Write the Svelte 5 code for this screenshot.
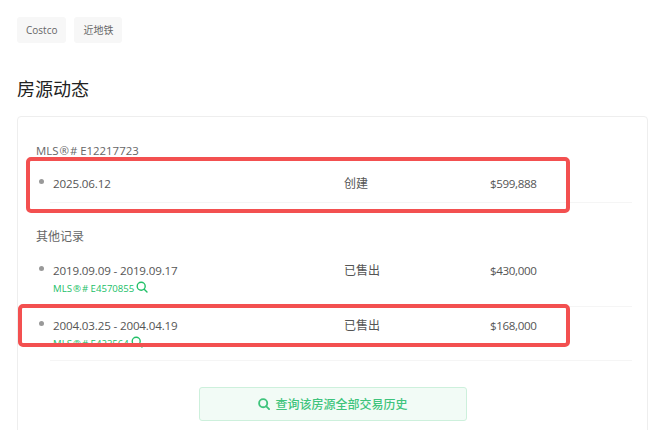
<script>
  const otherRecords = [
    { date: "2019.09.09 - 2019.09.17", status: "已售出", price: "$430,000", mls: "MLS", id: "# E4570855" },
    { date: "2004.03.25 - 2004.04.19", status: "已售出", price: "$168,000", mls: "MLS", id: "# E423564" },
  ];
</script>

<div class="page">
  <div class="tags">
    <span class="tag">Costco</span>
    <span class="tag">近地铁</span>
  </div>

  <h2>房源动态</h2>

  <section class="card">
    <div class="label first">MLS<span class="reg">®</span># E12217723</div>
    <div class="row">
      <i class="dot"></i>
      <div class="body">
        <div class="date">2025.06.12</div>
        <div>创建</div>
        <div class="price">$599,888</div>
      </div>
    </div>

    <div class="label other">其他记录</div>
    {#each otherRecords as rec}
      <div class="row">
        <i class="dot"></i>
        <div class="body">
          <div>
            <div class="date">{rec.date}</div>
            <a class="mls" href="#top">
              <span>{rec.mls}<span class="reg">®</span>{rec.id}</span>
              <svg width="12" height="12" viewBox="0 0 12 12" fill="none" stroke="#22c068" stroke-width="1.4">
                <circle cx="5.2" cy="5.2" r="4" />
                <path d="M8.2 8.2 11 11" stroke-linecap="round" />
              </svg>
            </a>
          </div>
          <div>{rec.status}</div>
          <div class="price">{rec.price}</div>
        </div>
      </div>
    {/each}

    <button class="history">
      <svg width="12" height="12" viewBox="0 0 13 13" fill="none" stroke="#3ec47c" stroke-width="2">
        <circle cx="5.6" cy="5.6" r="4.4" />
        <path d="M9 9l3 3" stroke-linecap="round" />
      </svg>
      查询该房源全部交易历史
    </button>
  </section>

  <div class="mark mark-a"></div>
  <div class="mark mark-b"></div>
</div>

<style>
  :global(body) {
    margin: 0;
    background: #fff;
    overflow: hidden;
  }

  .page {
    position: relative;
    height: 430px;
    overflow: hidden;
    padding: 17px 12px 0 17px;
    box-sizing: border-box;
    font-family: "Open Sans", "Noto Sans CJK SC", sans-serif;
    font-size: 12px;
    color: #555;
  }

  .tags {
    display: flex;
    gap: 8px;
  }

  .tag {
    background: #f7f7f7;
    border-radius: 3px;
    color: #666;
    font-size: 10px;
    height: 26px;
    line-height: 26px;
    padding: 0 9px;
  }

  h2 {
    margin: 33px 0 14px;
    font-size: 18px;
    font-weight: 400;
    line-height: 26px;
    color: #222;
  }

  .card {
    border: 1px solid #eee;
    border-radius: 4px;
    padding: 25px 15px 0 18px;
    height: 340px;
    box-sizing: border-box;
  }

  .label {
    line-height: 18px;
    color: #666;
  }

  .first {
    font-size: 11.4px;
  }

  .reg {
    margin: 0 1px;
  }

  .other {
    margin: 25px 0 6px;
  }

  .row {
    display: flex;
  }

  .dot {
    width: 5px;
    height: 5px;
    margin: 14px 6px 0 3px;
    flex: none;
    border-radius: 50%;
    background: #999;
  }

  .first + .row .dot {
    margin-top: 19px;
  }

  .body {
    flex: 1;
    display: grid;
    grid-template-columns: 291px 146px 1fr;
    padding: 10px 0 0 3px;
    border-bottom: 1px solid #f5f5f5;
    line-height: 18px;
    height: 54px;
    box-sizing: border-box;
  }

  .first + .row .body {
    height: 43px;
    padding-top: 15px;
  }

  .other + .row .body {
    height: 55px;
  }

  .date {
    font-size: 11.6px;
    letter-spacing: -0.15px;
  }

  .price {
    font-size: 11.6px;
    letter-spacing: -0.35px;
  }

  .mls {
    display: flex;
    align-items: center;
    gap: 2px;
    color: #22c068;
    font-size: 9.6px;
    line-height: 18px;
    text-decoration: none;
  }

  .mls svg {
    margin-top: -4px;
  }

  .history {
    display: flex;
    align-items: center;
    justify-content: center;
    gap: 5px;
    width: 268px;
    height: 34px;
    margin: 26px 0 0 163px;
    background: #f2fbf6;
    border: 1px solid #cdf0dc;
    border-radius: 3px;
    color: #3ec47c;
    font: inherit;
    font-weight: 500;
    cursor: pointer;
  }

  .mark {
    position: absolute;
    border: 4px solid #f35050;
    border-radius: 5px;
    box-sizing: border-box;
  }

  .mark-a {
    left: 26px;
    top: 157px;
    width: 544px;
    height: 56px;
  }

  .mark-b {
    left: 18px;
    top: 304px;
    width: 552px;
    height: 43px;
  }
</style>
